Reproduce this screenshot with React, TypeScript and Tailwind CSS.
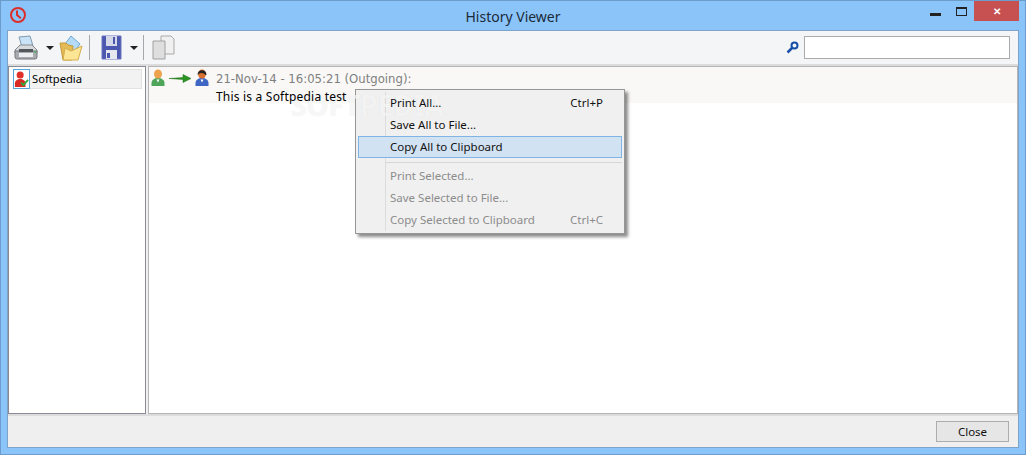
const ui = { fontFamily: '"Noto Sans", "Liberation Sans", sans-serif' };

function ClockIcon() {
  return (
    <svg width="18" height="18" viewBox="0 0 18 18" fill="none" stroke="#dc2f2a" strokeWidth="2">
      <circle cx="9" cy="9" r="7" />
      <path d="M8 4.500V9l3.800 3.200" />
    </svg>
  );
}

function Printer() {
  return (
    <svg width="24" height="26" viewBox="0 0 24 26" className="shrink-0">
      <path d="M5 2l11-1 3 10-11 1z" fill="#c9e2f5" stroke="#7f9bb3" />
      <path d="M1 15l5-5h12l5 5v3H1z" fill="#d7dadc" stroke="#858b8f" />
      <path d="M1 16h22v6a2 2 0 0 1-2 2H3a2 2 0 0 1-2-2z" fill="#a8acb0" stroke="#74797d" />
      <rect x="5" y="14" width="14" height="3" fill="#54585c" />
      <rect x="5" y="18" width="14" height="4" fill="#eceeef" />
      <circle cx="21" cy="17" r="1" fill="#4fb060" />
    </svg>
  );
}

function Folder() {
  return (
    <svg width="24" height="26" viewBox="0 0 24 26" className="shrink-0">
      <path d="M12 1l9 8-6 8-9-8z" fill="#b4dbf6" stroke="#6da9d3" />
      <path d="M1 8h6l2 2 5 1-1 14H4z" fill="#e4bb55" stroke="#c49a3c" />
      <path d="M4 25L6 13l6 3 11-5-4 14z" fill="#fce594" stroke="#d5ae4c" />
    </svg>
  );
}

function Floppy() {
  return (
    <svg width="21" height="25" viewBox="0 0 21 25" className="shrink-0">
      <path d="M1 1h19v23H1z" fill="#4c57b0" stroke="#6a74c0" />
      <rect x="5" y="1" width="11" height="10" fill="#d4d8e8" />
      <rect x="12" y="2" width="2" height="7" fill="#4c57b0" />
      <rect x="5" y="15" width="11" height="9" fill="#e6e7ee" />
      <rect x="6" y="18" width="3" height="5" fill="#4c57b0" />
    </svg>
  );
}

function Copy() {
  return (
    <svg width="23" height="25" viewBox="0 0 23 25" className="shrink-0">
      <path d="M9 1h10l3 3v15H9z" fill="#f0f0f0" stroke="#a9a9a9" />
      <path d="M1 6h12v18H1z" fill="#dedede" stroke="#a0a0a0" />
    </svg>
  );
}

function Caret({ className }: { className: string }) {
  return <span className={`block shrink-0 w-0 h-0 border-x-[4px] border-x-transparent border-t-[4px] border-t-[#222] ${className}`} />;
}

function Sep({ className }: { className: string }) {
  return <span className={`block shrink-0 w-px h-[25px] bg-[#a4a8ac] ${className}`} />;
}

function Person({ body, head, hair }: { body: string; head: string; hair?: string }) {
  return (
    <svg width="14" height="18" viewBox="0 0 14 18" className="shrink-0">
      <path d="M0.500 17v-3c0-3 3-5 6.500-5s6.500 2 6.500 5v3z" fill={body} />
      <ellipse cx="7" cy="5" rx="4" ry="4.600" fill={head} />
      {hair ? <path d="M2.500 6a4.500 4.800 0 0 1 9 0l-1 0c-1-2-5-3-7-1z" fill={hair} /> : null}
      <path d="M5.500 10.500l1.500 3 1.500-3z" fill="#fff" />
    </svg>
  );
}

function Arrow() {
  return (
    <svg width="22" height="9" viewBox="0 0 22 9">
      <path d="M0 4.500l14-1V0.500l8 4-8 4V5.500z" fill="#2b9422" stroke="#1e6e18" strokeWidth="0.5" />
    </svg>
  );
}

function MenuItem({ label, keys, disabled, active }: { label: string; keys?: string; disabled?: boolean; active?: boolean }) {
  return (
    <div className={`flex items-center h-[22px] pl-[31px] pr-[18px] border ${active ? "border-[#7fb4e4] bg-[#d1e2f2]" : "border-transparent"} ${disabled ? "text-[#8c8c8c]" : "text-[#111]"}`}>
      <span className="flex-1">{label}</span>
      {keys ? <span>{keys}</span> : null}
    </div>
  );
}

export default function App() {
  return (
    <div className="relative w-[1026px] h-[455px] flex flex-col overflow-hidden bg-[#8ac4f9] border border-[#6b9ccc] px-[6px] pb-[6px]" style={ui}>
      <header className="relative flex items-center justify-center h-[29px] shrink-0">
        <span className="absolute left-[2px] top-[5px]"><ClockIcon /></span>
        <span className="text-[14px] text-[#1c2b3a] mt-[1px]">History Viewer</span>
        <div className="absolute right-[-6px] top-0 flex items-start">
          <span className="w-[11px] h-[3px] bg-[#222] mt-[12px] mr-[15px]" />
          <span className="w-[11px] h-[9px] border border-[#222] border-t-[2px] mt-[6px] mr-[7px]" />
          <span className="flex items-center justify-center w-[45px] h-[20px] bg-[#c75050] text-white text-[10px] font-bold leading-none mr-[6px]">✕</span>
        </div>
      </header>

      <main className="flex flex-col flex-1 min-h-0 border border-[#7ea5c9] bg-[#f0f0f0]">
        <div className="flex items-center h-[35px] shrink-0 bg-[#f4f5f7] border-b-2 border-[#dcdcdc] pl-[6px] pr-[8px]">
          <Printer />
          <Caret className="ml-[8px] mr-[5px]" />
          <Folder />
          <Sep className="ml-[6px] mr-[11px]" />
          <Floppy />
          <Caret className="ml-[8px]" />
          <Sep className="ml-[5px] mr-[8px]" />
          <Copy />
          <div className="flex-1" />
          <svg width="13" height="13" viewBox="0 0 13 13" fill="none" className="mr-[5px]">
            <circle cx="8.500" cy="4.500" r="3" stroke="#174ea6" strokeWidth="2" />
            <path d="M6 7l-4.500 4.500" stroke="#174ea6" strokeWidth="2.500" />
          </svg>
          <div className="w-[206px] h-[23px] bg-white border border-[#ababab]" />
        </div>

        <div className="flex flex-1 min-h-0 gap-[2px]">
          <div className="w-[138px] bg-white border border-[#8a8a96] pt-[2px] pl-[4px] pr-[3px] shrink-0">
            <div className="flex items-center h-[20px] bg-[#f2f2f2] border border-[#e2e2e2] text-[11.2px] text-black">
              <svg width="17" height="20" viewBox="0 0 17 20" className="shrink-0 -ml-px border border-[#5aa5d8] bg-white">
                <circle cx="7" cy="5.500" r="4" fill="#e0322a" />
                <path d="M1 19v-4c0-3 3-5 6-5s6 2 6 5v4z" fill="#d92a24" />
                <path d="M8 14l2.500 3L16 11" fill="none" stroke="#30a83a" strokeWidth="2" />
              </svg>
              <span className="ml-[2px]">Softpedia</span>
            </div>
          </div>
          <div className="flex-1 bg-white border border-[#b4b4b4]">
            <div className="flex h-[36px] bg-[#f9f8f6] pl-[2px] pt-[2px] text-[12px]">
              <div className="flex items-start w-[65px] shrink-0">
                <Person body="#4fa65a" head="#eda24e" />
                <span className="ml-[4px] mt-[5px] flex"><Arrow /></span>
                <span className="ml-[4px] flex"><Person body="#3f66c4" head="#d9702f" hair="#222" /></span>
              </div>
              <div className="flex flex-col leading-[17px] pt-[2px]">
                <span className="text-[#7f7f7f]" style={{ fontFamily: '"DejaVu Sans", sans-serif', fontSize: 11.7 }}>21-Nov-14 - 16:05:21 (Outgoing):</span>
                <span className="relative z-10 text-black tracking-[0.2px]">This is a Softpedia test</span>
              </div>
            </div>
          </div>
        </div>

        <div className="flex items-center justify-end h-[33px] shrink-0 bg-[#efefef] border-t-2 border-[#dcdcdc] pr-[9px]">
          <button className="w-[73px] h-[21px] bg-[#e6e6e6] border border-[#acacac] text-[11.5px] text-[#111]">Close</button>
        </div>
      </main>

      <div className="absolute left-[354px] top-[88px] w-[270px] h-[145px] bg-[#f0f0f0] border border-[#979797] shadow-[3px_3px_3px_rgba(0,0,0,0.45)] pt-[2px] px-[2px] text-[11.5px]">
        <span className="absolute left-[29px] top-[2px] bottom-[2px] w-px bg-[#dcdcdc]" />
        <div className="relative z-10">
          <MenuItem label="Print All..." keys="Ctrl+P" />
          <MenuItem label="Save All to File..." />
          <MenuItem label="Copy All to Clipboard" active />
          <div className="h-px bg-[#d7d7d7] ml-[28px] mt-[4px] mb-[2px]" />
          <MenuItem label="Print Selected..." disabled />
          <MenuItem label="Save Selected to File..." disabled />
          <MenuItem label="Copy Selected to Clipboard" keys="Ctrl+C" disabled />
        </div>
      </div>

      <span className="absolute left-[290px] top-[90px] text-[28px] font-bold leading-none text-white/70 [text-shadow:0_0_1px_rgba(0,0,0,0.1)] pointer-events-none">SOFTPEDIA</span>
    </div>
  );
}
